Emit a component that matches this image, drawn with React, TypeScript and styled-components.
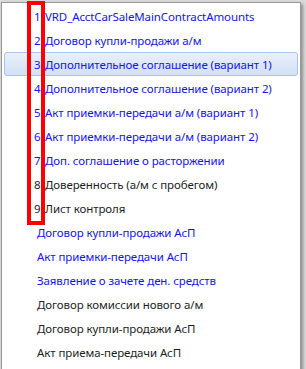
import styled, { createGlobalStyle } from "styled-components";

const GlobalStyle = createGlobalStyle`
  html, body {
    margin: 0;
    padding: 0;
    background: #dadada;
    overflow: hidden;
  }
  body {
    font-family: "Noto Sans", "Open Sans", sans-serif;
  }
`;

const Page = styled.div`
  position: relative;
  width: 306px;
  height: 369px;
  padding: 2px 0 0 1px;
  box-sizing: border-box;
`;

const Menu = styled.div`
  width: 300px;
  height: 380px;
  box-sizing: border-box;
  background: #ffffff;
  border: 1px solid #979797;
  box-shadow: 2px 2px 3px rgba(0, 0, 0, 0.35);
  padding: 1px 2px 0 2px;
  display: flex;
  flex-direction: column;
`;

const Item = styled.div<{ $hot?: boolean; $blue?: boolean }>`
  height: 24px;
  box-sizing: border-box;
  display: flex;
  align-items: center;
  padding-left: ${(p) => (p.$hot ? "29px" : "30px")};
  font-size: 11.5px;
  letter-spacing: -0.1px;
  white-space: nowrap;
  color: ${(p) => (p.$blue ? "#1414ee" : "#1e1e1e")};
  border-radius: 3px;
  border: ${(p) => (p.$hot ? "1px solid #a9c5ec" : "none")};
  background: ${(p) =>
    p.$hot ? "linear-gradient(#e9f0fa, #d2e0f4)" : "transparent"};
`;

const Num = styled.span`
  display: inline-block;
  width: 11px;
`;

const Plain = styled.span`
  padding-left: 3px;
`;

const Marker = styled.div`
  position: absolute;
  left: 27px;
  top: 1px;
  width: 18px;
  height: 224px;
  box-sizing: border-box;
  border: 4px solid #ff0000;
  pointer-events: none;
`;

type Entry = { n?: number; text: string; blue: boolean };

const entries: Entry[] = [
  { n: 1, text: "VRD_AcctCarSaleMainContractAmounts", blue: true },
  { n: 2, text: "Договор купли-продажи а/м", blue: true },
  { n: 3, text: "Дополнительное соглашение (вариант 1)", blue: true },
  { n: 4, text: "Дополнительное соглашение (вариант 2)", blue: true },
  { n: 5, text: "Акт приемки-передачи а/м (вариант 1)", blue: true },
  { n: 6, text: "Акт приемки-передачи а/м (вариант 2)", blue: true },
  { n: 7, text: "Доп. соглашение о расторжении", blue: true },
  { n: 8, text: "Доверенность (а/м с пробегом)", blue: false },
  { n: 9, text: "Лист контроля", blue: false },
  { text: "Договор купли-продажи АсП", blue: true },
  { text: "Акт приемки-передачи АсП", blue: true },
  { text: "Заявление о зачете ден. средств", blue: true },
  { text: "Договор комиссии нового а/м", blue: false },
  { text: "Договор купли-продажи АсП", blue: false },
  { text: "Акт приема-передачи АсП", blue: false },
];

const App = () => {
  return (
    <Page>
      <GlobalStyle />
      <Menu>
        {entries.map((e, i) => (
          <Item key={i} $blue={e.blue} $hot={i === 2}>
            {e.n ? (
              <>
                <Num>{e.n}</Num>
                {e.text}
              </>
            ) : (
              <Plain>{e.text}</Plain>
            )}
          </Item>
        ))}
      </Menu>
      <Marker />
    </Page>
  );
};

export default App;
